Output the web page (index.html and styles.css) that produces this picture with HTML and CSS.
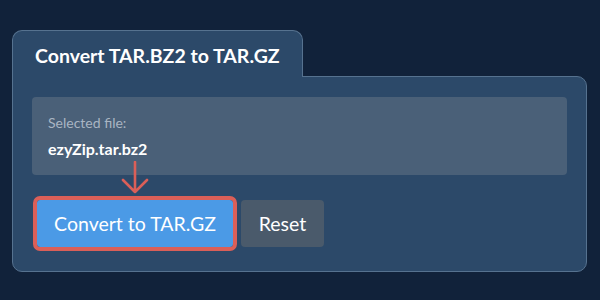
FILE: index.html
```html
<!DOCTYPE html>
<html lang="en">
<head>
    <meta charset="UTF-8">
    <title>Convert TAR.BZ2 to TAR.GZ</title>
    <link rel="stylesheet" href="styles.css">
</head>
<body>

    <div class="converter">
        <div class="tab">
            <h1>Convert TAR.BZ2 to TAR.GZ</h1>
        </div>

        <div class="panel">
            <div class="file-box">
                <p class="file-label">Selected file:</p>
                <p class="file-name">ezyZip.tar.bz2</p>
            </div>

            <div class="actions">
                <!-- red pointer arrow over the convert button -->
                <svg class="pointer" width="30" height="34" viewBox="0 0 30 34">
                    <path d="M15 1 V31 M3 19 L15 31 L27 19" fill="none" stroke="#db5f58" stroke-width="2.6" stroke-linecap="round" stroke-linejoin="round"/>
                </svg>
                <button class="convert-btn">Convert to TAR.GZ</button>
                <button class="reset-btn">Reset</button>
            </div>
        </div>
    </div>

</body>
</html>
```

FILE: styles.css
```css
/* Reset and Global Styles */
* {
    margin: 0;
    padding: 0;
    box-sizing: border-box;
}

body {
    font-family: Lato, "Open Sans", sans-serif;
    background-color: #11223a;
    color: white;
    padding: 30px 13px 0 12px;
}

.converter {
    width: 575px;
}

.tab {
    position: relative;
    z-index: 1;
    width: 291px;
    height: 47px;
    margin-bottom: -1px;
    background-color: #2c4969;
    border: 1px solid #56728f;
    border-bottom: none;
    border-radius: 10px 10px 0 0;
    padding: 12px 0 0 22px;
}

.tab h1 {
    font-size: 19.5px;
    font-weight: bold;
    line-height: 26px;
}

.panel {
    background-color: #2c4969;
    border: 1px solid #56728f;
    border-radius: 0 10px 10px 10px;
    padding: 20px 19px 24px 19px;
}

.file-box {
    height: 78px;
    background-color: #4a6078;
    border-radius: 4px;
    padding: 17px 16px 0 16px;
}

.file-label {
    font-size: 14px;
    color: #a9b5c3;
    line-height: 18px;
}

.file-name {
    font-size: 16px;
    font-weight: bold;
    line-height: 20px;
    margin-top: 7px;
}

.actions {
    position: relative;
    display: flex;
    gap: 8px;
    margin-top: 25px;
    padding-left: 5px;
}

.pointer {
    position: absolute;
    left: 88px;
    top: -39px;
}

.convert-btn,
.reset-btn {
    height: 47px;
    border: none;
    border-radius: 4px;
    color: white;
    font-family: Lato, sans-serif;
    font-size: 19.5px;
}

.convert-btn {
    width: 196px;
    background-color: #4b9ae6;
    outline: 4px solid #db5f58;
    border-radius: 3px;
}

.reset-btn {
    width: 83px;
    background-color: #4a5a6b;
}
```
